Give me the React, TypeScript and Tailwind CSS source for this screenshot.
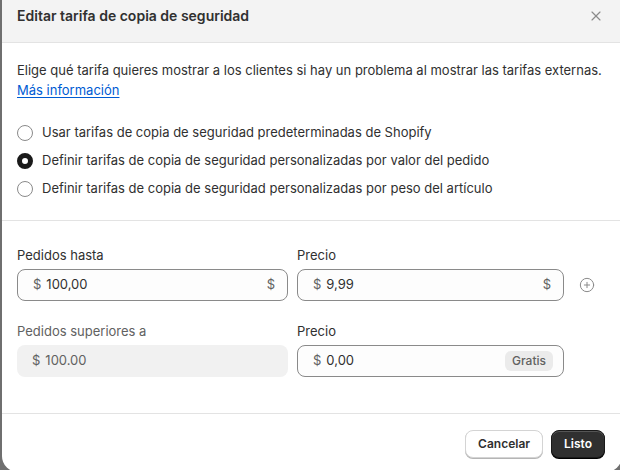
import { X, CirclePlus } from 'lucide-react';

const font = { fontFamily: 'Inter, "Noto Sans", sans-serif' };

function Radio({ label, checked }: { label: string; checked?: boolean }) {
  return (
    <label className="flex items-center gap-[9px] h-[28px]">
      <span
        className={
          checked
            ? 'w-[16px] h-[16px] rounded-full border-[5px] border-[#1a1a1a] bg-white'
            : 'w-[16px] h-[16px] rounded-full border border-[#8a8a8a] bg-white'
        }
      />
      <span className="text-[13px] text-[#303030]">{label}</span>
    </label>
  );
}

function Field({
  label,
  value,
  suffix,
  badge,
  disabled,
}: {
  label: string;
  value: string;
  suffix?: string;
  badge?: string;
  disabled?: boolean;
}) {
  return (
    <div className="flex flex-col gap-[4px]">
      <span className={disabled ? 'text-[13px] leading-[20px] text-[#616161]' : 'text-[13px] leading-[20px] text-[#303030]'}>
        {label}
      </span>
      <div
        className={
          disabled
            ? 'h-[32px] rounded-lg bg-[#f1f1f1] flex items-center px-[15px] text-[13px] text-[#616161]'
            : 'h-[32px] rounded-lg border border-[#8a8a8a] bg-[#fdfdfd] flex items-center pl-[15px] pr-[12px] text-[13px] text-[#303030]'
        }
      >
        <span className="text-[#616161] mr-[5px]">$</span>
        <span className="flex-1">{value}</span>
        {suffix && <span className="text-[#616161]">{suffix}</span>}
        {badge && (
          <span className="h-[20px] px-[7px] rounded-md bg-[#ebebeb] text-[12px] font-medium text-[#616161] flex items-center -mr-[2px]">
            {badge}
          </span>
        )}
      </div>
    </div>
  );
}

export default function App() {
  return (
    <div className="w-[620px] h-[470px] overflow-hidden bg-[#6f6f6f]" style={font}>
      <div className="ml-[2px] w-[620px] h-[472px] bg-white rounded-b-[16px] flex flex-col">
        <div className="h-[43px] bg-[#f3f3f3] border-b border-[#e3e3e3] flex items-start justify-between pl-[15px] pr-[18px] pt-[6px]">
          <h2 className="text-[14px] leading-[20px] font-semibold text-[#303030]">Editar tarifa de copia de seguridad</h2>
          <div className="h-[20px] flex items-center">
            <X className="w-[16px] h-[16px] text-[#8a8a8a]" strokeWidth={1.75} />
          </div>
        </div>

        <div className="pl-[15px] pr-[16px] pt-[17px] pb-[17px] border-b border-[#e3e3e3] flex flex-col">
          <p className="text-[13px] leading-[20px] text-[#303030]">
            Elige qué tarifa quieres mostrar a los clientes si hay un problema al mostrar las tarifas externas.
            <br />
            <a className="text-[#005bd3] underline underline-offset-2">Más información</a>
          </p>
          <div className="mt-[19px] flex flex-col">
            <Radio label="Usar tarifas de copia de seguridad predeterminadas de Shopify" />
            <Radio label="Definir tarifas de copia de seguridad personalizadas por valor del pedido" checked />
            <Radio label="Definir tarifas de copia de seguridad personalizadas por peso del artículo" />
          </div>
        </div>

        <div className="pl-[15px] pt-[24px] pb-[36px] border-b border-[#e3e3e3] flex flex-col gap-[20px]">
          <div className="flex items-end">
            <div className="w-[271px]">
              <Field label="Pedidos hasta" value="100,00" suffix="$" />
            </div>
            <div className="w-[267px] ml-[9px]">
              <Field label="Precio" value="9,99" suffix="$" />
            </div>
            <div className="h-[32px] flex items-center ml-[15px]">
              <CirclePlus className="w-[16px] h-[16px] text-[#8a8a8a]" strokeWidth={1.5} />
            </div>
          </div>
          <div className="flex items-end">
            <div className="w-[271px]">
              <Field label="Pedidos superiores a" value="100.00" disabled />
            </div>
            <div className="w-[267px] ml-[9px]">
              <Field label="Precio" value="0,00" badge="Gratis" />
            </div>
          </div>
        </div>

        <div className="flex justify-end gap-[8px] pt-[16px] pr-[17px]">
          <button className="h-[28px] px-[12px] rounded-lg bg-white border border-[#d4d4d4] shadow-[0_1px_0_#b5b5b5] text-[12px] font-semibold text-[#303030]">
            Cancelar
          </button>
          <button className="h-[28px] px-[12px] rounded-lg bg-[#303030] border border-[#1a1a1a] shadow-[inset_0_1px_0_#555,0_1px_0_#000] text-[12px] font-semibold text-white">
            Listo
          </button>
        </div>
      </div>
    </div>
  );
}
